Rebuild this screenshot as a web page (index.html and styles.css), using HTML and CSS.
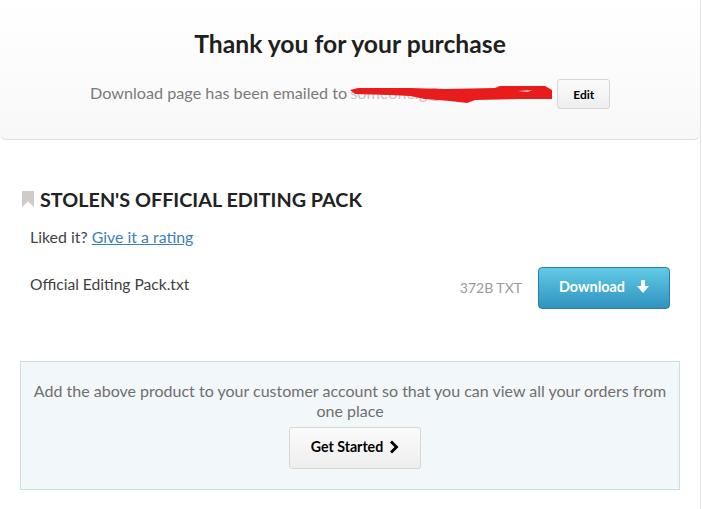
FILE: index.html
```html
<!DOCTYPE html>
<html lang="en">
<head>
    <meta charset="UTF-8">
    <title>Thank you for your purchase</title>
    <link rel="stylesheet" href="styles.css">
</head>
<body>
    <div class="card">
        <header class="thanks">
            <h1>Thank you for your purchase</h1>
            <div class="emailed">
                <span class="emailed-text">Download page has been emailed to</span>
                <span class="email">
                    <span class="email-text">someone.g@</span>
                    <svg class="scribble" width="204" height="20" viewBox="0 0 204 20">
                        <path d="M0 5 L8 3 L60 3 L95 4 L145 3 L150 1 L195 1 L202 5 L202 14 L170 14 L125 15 L117 18 L100 16 L75 14 L60 11 L40 10 L5 9 Z" fill="#e81c1c"/>
                        <path d="M168 6 L182 5 L178 7 Z" fill="#f6c9c9"/>
                    </svg>
                </span>
                <button class="btn btn-edit">Edit</button>
            </div>
        </header>

        <section class="product">
            <h2 class="product-title">
                <svg width="12" height="16" viewBox="0 0 12 16"><path d="M0 0 H12 V16 L6 10.5 L0 16 Z" fill="#cfcbc6"/></svg>
                STOLEN'S OFFICIAL EDITING PACK
            </h2>
            <p class="rating">Liked it? <a href="#">Give it a rating</a></p>
            <div class="file-row">
                <span class="file-name">Official Editing Pack.txt</span>
                <span class="file-size">372B TXT</span>
                <button class="btn-download">
                    Download
                    <svg width="12" height="14" viewBox="0 0 12 14"><path d="M4 0 H8 V6 H12 L6 13 L0 6 H4 Z" fill="#fff"/></svg>
                </button>
            </div>
        </section>

        <section class="account">
            <p>Add the above product to your customer account so that you can view all your orders from one place</p>
            <button class="btn btn-start">
                Get Started
                <svg width="10" height="14" viewBox="0 0 10 14"><path d="M1 2.5 L3 0.5 L9.5 7 L3 13.5 L1 11.5 L5.5 7 Z" fill="#000"/></svg>
            </button>
        </section>
    </div>
</body>
</html>
```

FILE: styles.css
```css
body { margin: 0; background: #fff; font-family: Lato, "Open Sans", sans-serif; color: #3f3f3f; overflow: hidden; }
.card { width: 700px; height: 520px; border-right: 1px solid #e4e4e4; }

.thanks { height: 140px; box-sizing: border-box; padding-top: 30px; background: linear-gradient(#ffffff, #f8f8f8); border-bottom: 1px solid #dedede; border-radius: 0 0 6px 6px; text-align: center; }
.thanks h1 { margin: 0; font-size: 24.7px; line-height: 28px; font-weight: 700; color: #1f1f1f; }
.emailed { display: flex; align-items: center; margin-top: 21px; padding-left: 90px; font-size: 16.2px; color: #7a7a7a; }
.emailed-text { white-space: nowrap; padding-bottom: 4px; }
.email { position: relative; margin-left: 3px; width: 204px; text-align: left; white-space: nowrap; padding-bottom: 4px; }
.email-text { color: #c4c4c4; }
.scribble { position: absolute; left: 0; top: 2px; }

.btn { border: 1px solid #d6d6d6; border-radius: 3px; background: linear-gradient(#fbfbfb, #eeeeee); color: #000; font-family: inherit; font-weight: 700; }
.btn-edit { width: 53px; height: 30px; margin-left: 3px; padding: 0; font-size: 12px; }

.product { padding: 46px 30px 0 22px; }
.product-title { display: flex; align-items: center; gap: 6px; margin: 0; font-size: 19.8px; line-height: 26px; font-weight: 700; color: #222; }
.rating { margin: 14px 0 0 8px; font-size: 15.9px; line-height: 22px; color: #444; }
.rating a { color: #3d7fb8; }
.file-row { display: flex; align-items: center; margin: 19px 0 0 8px; height: 42px; font-size: 15.6px; }
.file-name { flex: 1; margin-top: -8px; }
.file-size { margin-right: 16px; padding-bottom: 2px; font-size: 14px; color: #9a9a9a; }
.btn-download { display: flex; align-items: center; justify-content: center; gap: 12px; width: 132px; height: 42px; padding: 0 0 3px; border: 1px solid #2a7fa8; border-radius: 4px; background: linear-gradient(#62cbe6, #2f92bf); color: #fff; font-family: inherit; font-size: 14.4px; font-weight: 700; }

.account { margin: 52px 0 0 20px; width: 660px; height: 129px; border: 1px solid #ccdde3; background: #f2f7fa; text-align: center; padding: 19px 10px 0; box-sizing: border-box; }
.account p { margin: 0; font-size: 16px; line-height: 20px; color: #6f6f6f; }
.btn-start { display: inline-flex; align-items: center; justify-content: center; gap: 6px; width: 132px; height: 42px; margin: 6px 0 0 10px; padding: 0 0 3px; font-size: 14.2px; }
```
